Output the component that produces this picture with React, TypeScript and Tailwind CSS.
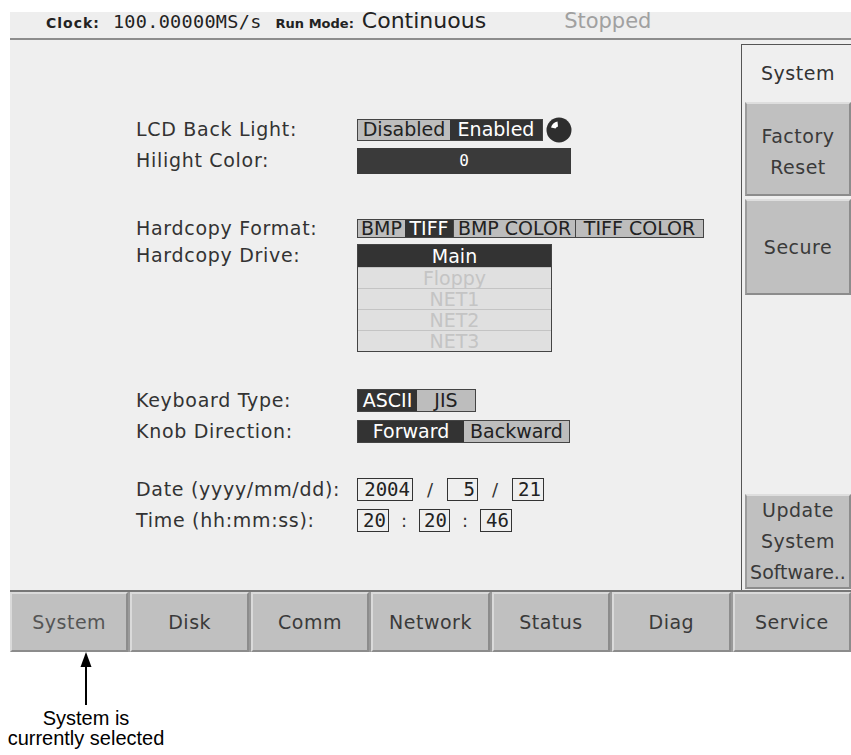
import type { ReactNode } from "react";

const sans = "font-['DejaVu_Sans',sans-serif]";
const mono = "font-['DejaVu_Sans_Mono',monospace]";
const label = "w-[221px] shrink-0 text-[19px] tracking-[0.7px] text-[#333]";

function Seg({ on, w, children }: { on: boolean; w: string; children: ReactNode }) {
  return (
    <div
      className={`${w} flex h-full items-center justify-center text-[19px] leading-none ${
        on ? "bg-[#333] text-white" : "bg-[#bdbdbd] text-[#222]"
      }`}
    >
      {children}
    </div>
  );
}

function NumBox({ w, children }: { w: string; children: ReactNode }) {
  return (
    <div
      className={`${w} ${mono} flex h-[23px] items-center justify-end border border-[#333] pr-[2px] text-[19px] leading-none text-[#222]`}
    >
      {children}
    </div>
  );
}

function Bevel({ className, children }: { className: string; children: ReactNode }) {
  return (
    <div
      className={`${className} flex flex-col items-center justify-center border-2 border-t-[#dedede] border-l-[#9c9c9c] border-r-[#8c8c8c] border-b-[#8c8c8c] bg-[#c0c0c0] text-[19px] leading-[31px] tracking-[0.5px] text-[#3a3a3a]`}
    >
      {children}
    </div>
  );
}

const tabs = ["System", "Disk", "Comm", "Network", "Status", "Diag", "Service"];

export default function App() {
  return (
    <div className={`${sans} flex h-[755px] w-[851px] flex-col overflow-hidden bg-white`}>
      <div className="ml-[10px] mt-[12px] w-[841px]">
        {/* status strip */}
        <div className="flex h-[28px] items-baseline border-b-2 border-[#8c8c8c] bg-[#eeeeee] pl-[36px] leading-[18px] text-[#222]">
          <span className="text-[14px] font-bold tracking-[1px]">Clock:</span>
          <span className={`${mono} ml-[13px] text-[18.5px] tracking-[0.3px]`}>100.00000MS/s</span>
          <span className="ml-[14px] text-[13px] font-bold">Run Mode:</span>
          <span className="ml-[8px] text-[22px]">Continuous</span>
          <span className="ml-[78px] text-[21px] text-[#a0a0a0]">Stopped</span>
        </div>

        <div className="flex h-[550px] bg-[#efefef]">
          {/* settings */}
          <div className="flex-1 pl-[126px] pt-[74px]">
            <div className="flex h-[31px] items-center">
              <div className={label}>LCD Back Light:</div>
              <div className="flex h-[22px] border border-[#444]">
                <Seg on={false} w="w-[92px]">Disabled</Seg>
                <Seg on w="w-[92px]">Enabled</Seg>
              </div>
              <svg width="26" height="26" viewBox="0 0 26 26" className="ml-[3px]">
                <circle cx="13" cy="13" r="12.5" fill="#2e2e2e" />
                <path d="M5 10.5 A8.5 8.5 0 0 1 11.5 4.5 L12 9.5 A4 4 0 0 0 9.5 11.5 Z" fill="#fff" />
              </svg>
            </div>
            <div className="flex h-[31px] items-center">
              <div className={label}>Hilight Color:</div>
              <div className={`${mono} flex h-[26px] w-[214px] items-center justify-center bg-[#3a3a3a] text-[16px] text-white`}>
                0
              </div>
            </div>

            <div className="mt-[40px] flex h-[24px] items-center">
              <div className={label}>Hardcopy Format:</div>
              <div className="flex h-[19px] border border-[#444]">
                <Seg on={false} w="w-[47px]">BMP</Seg>
                <Seg on w="w-[48px]">TIFF</Seg>
                <div className="w-px bg-[#444]" />
                <Seg on={false} w="w-[121px]">BMP COLOR</Seg>
                <div className="w-px bg-[#444]" />
                <Seg on={false} w="w-[127px]">TIFF COLOR</Seg>
              </div>
            </div>
            <div className="mt-[4px] flex items-start">
              <div className={`${label} leading-[23px]`}>Hardcopy Drive:</div>
              <div className="flex w-[195px] flex-col border border-[#444] text-[19px] leading-none">
                <div className="flex h-[22px] items-center justify-center bg-[#333] text-white">Main</div>
                {["Floppy", "NET1", "NET2", "NET3"].map((d) => (
                  <div
                    key={d}
                    className="flex h-[21px] items-center justify-center border-t border-[#c4c4c4] bg-[#e0e0e0] text-[#c4c4c4]"
                  >
                    {d}
                  </div>
                ))}
              </div>
            </div>

            <div className="mt-[33px] flex h-[31px] items-center">
              <div className={label}>Keyboard Type:</div>
              <div className="flex h-[23px] border border-[#444]">
                <Seg on w="w-[59px]">ASCII</Seg>
                <Seg on={false} w="w-[58px]">JIS</Seg>
              </div>
            </div>
            <div className="flex h-[31px] items-center">
              <div className={label}>Knob Direction:</div>
              <div className="flex h-[23px] border border-[#444]">
                <Seg on w="w-[106px]">Forward</Seg>
                <Seg on={false} w="w-[105px]">Backward</Seg>
              </div>
            </div>

            <div className="mt-[27px] flex h-[31px] items-center">
              <div className={label}>Date (yyyy/mm/dd):</div>
              <NumBox w="w-[56px]">2004</NumBox>
              <span className="w-[34px] text-center text-[18px] text-[#333]">/</span>
              <NumBox w="w-[31px]">5</NumBox>
              <span className="w-[34px] text-center text-[18px] text-[#333]">/</span>
              <NumBox w="w-[32px]">21</NumBox>
            </div>
            <div className="flex h-[31px] items-center">
              <div className={label}>Time (hh:mm:ss):</div>
              <NumBox w="w-[32px]">20</NumBox>
              <span className="w-[30px] text-center text-[18px] text-[#333]">:</span>
              <NumBox w="w-[31px]">20</NumBox>
              <span className="w-[30px] text-center text-[18px] text-[#333]">:</span>
              <NumBox w="w-[32px]">46</NumBox>
            </div>
          </div>

          {/* side menu */}
          <div className="mt-[4px] flex w-[110px] flex-col border-l border-t border-[#555] pl-[3px]">
            <div className="flex h-[57px] items-center justify-center text-[19px] tracking-[0.5px] text-[#333]">
              System
            </div>
            <Bevel className="h-[94px] pt-[5px]">
              <span>Factory</span>
              <span>Reset</span>
            </Bevel>
            <Bevel className="mt-[3px] h-[96px]">
              <span>Secure</span>
            </Bevel>
            <div className="flex-1" />
            <Bevel className="mb-[1px] h-[95px]">
              <span>Update</span>
              <span>System</span>
              <span className="tracking-[0px]">Software..</span>
            </Bevel>
          </div>
        </div>

        {/* bottom menu */}
        <div className="grid h-[62px] grid-cols-7 gap-[2px] border-t-2 border-[#777] bg-[#9a9a9a]">
          {tabs.map((t, i) => (
            <div
              key={t}
              className={`flex items-center justify-center border-2 border-t-[#dadada] border-l-[#dadada] border-r-[#8c8c8c] border-b-[#8c8c8c] bg-[#c0c0c0] text-[19px] tracking-[0.5px] ${
                i === 0 ? "text-[#555]" : "text-[#3a3a3a]"
              }`}
            >
              {t}
            </div>
          ))}
        </div>
      </div>

      {/* callout */}
      <div className="flex w-[172px] flex-col items-center">
        <svg width="14" height="53" viewBox="0 0 14 53">
          <polygon points="7,0 1.5,15 12.5,15" fill="#000" />
          <rect x="6" y="14" width="2" height="39" fill="#000" />
        </svg>
        <div className="mt-[3px] text-center font-['Liberation_Sans',Arial,sans-serif] text-[20px] leading-[20px] text-black">
          <div>System is</div>
          <div>currently selected</div>
        </div>
      </div>
    </div>
  );
}
